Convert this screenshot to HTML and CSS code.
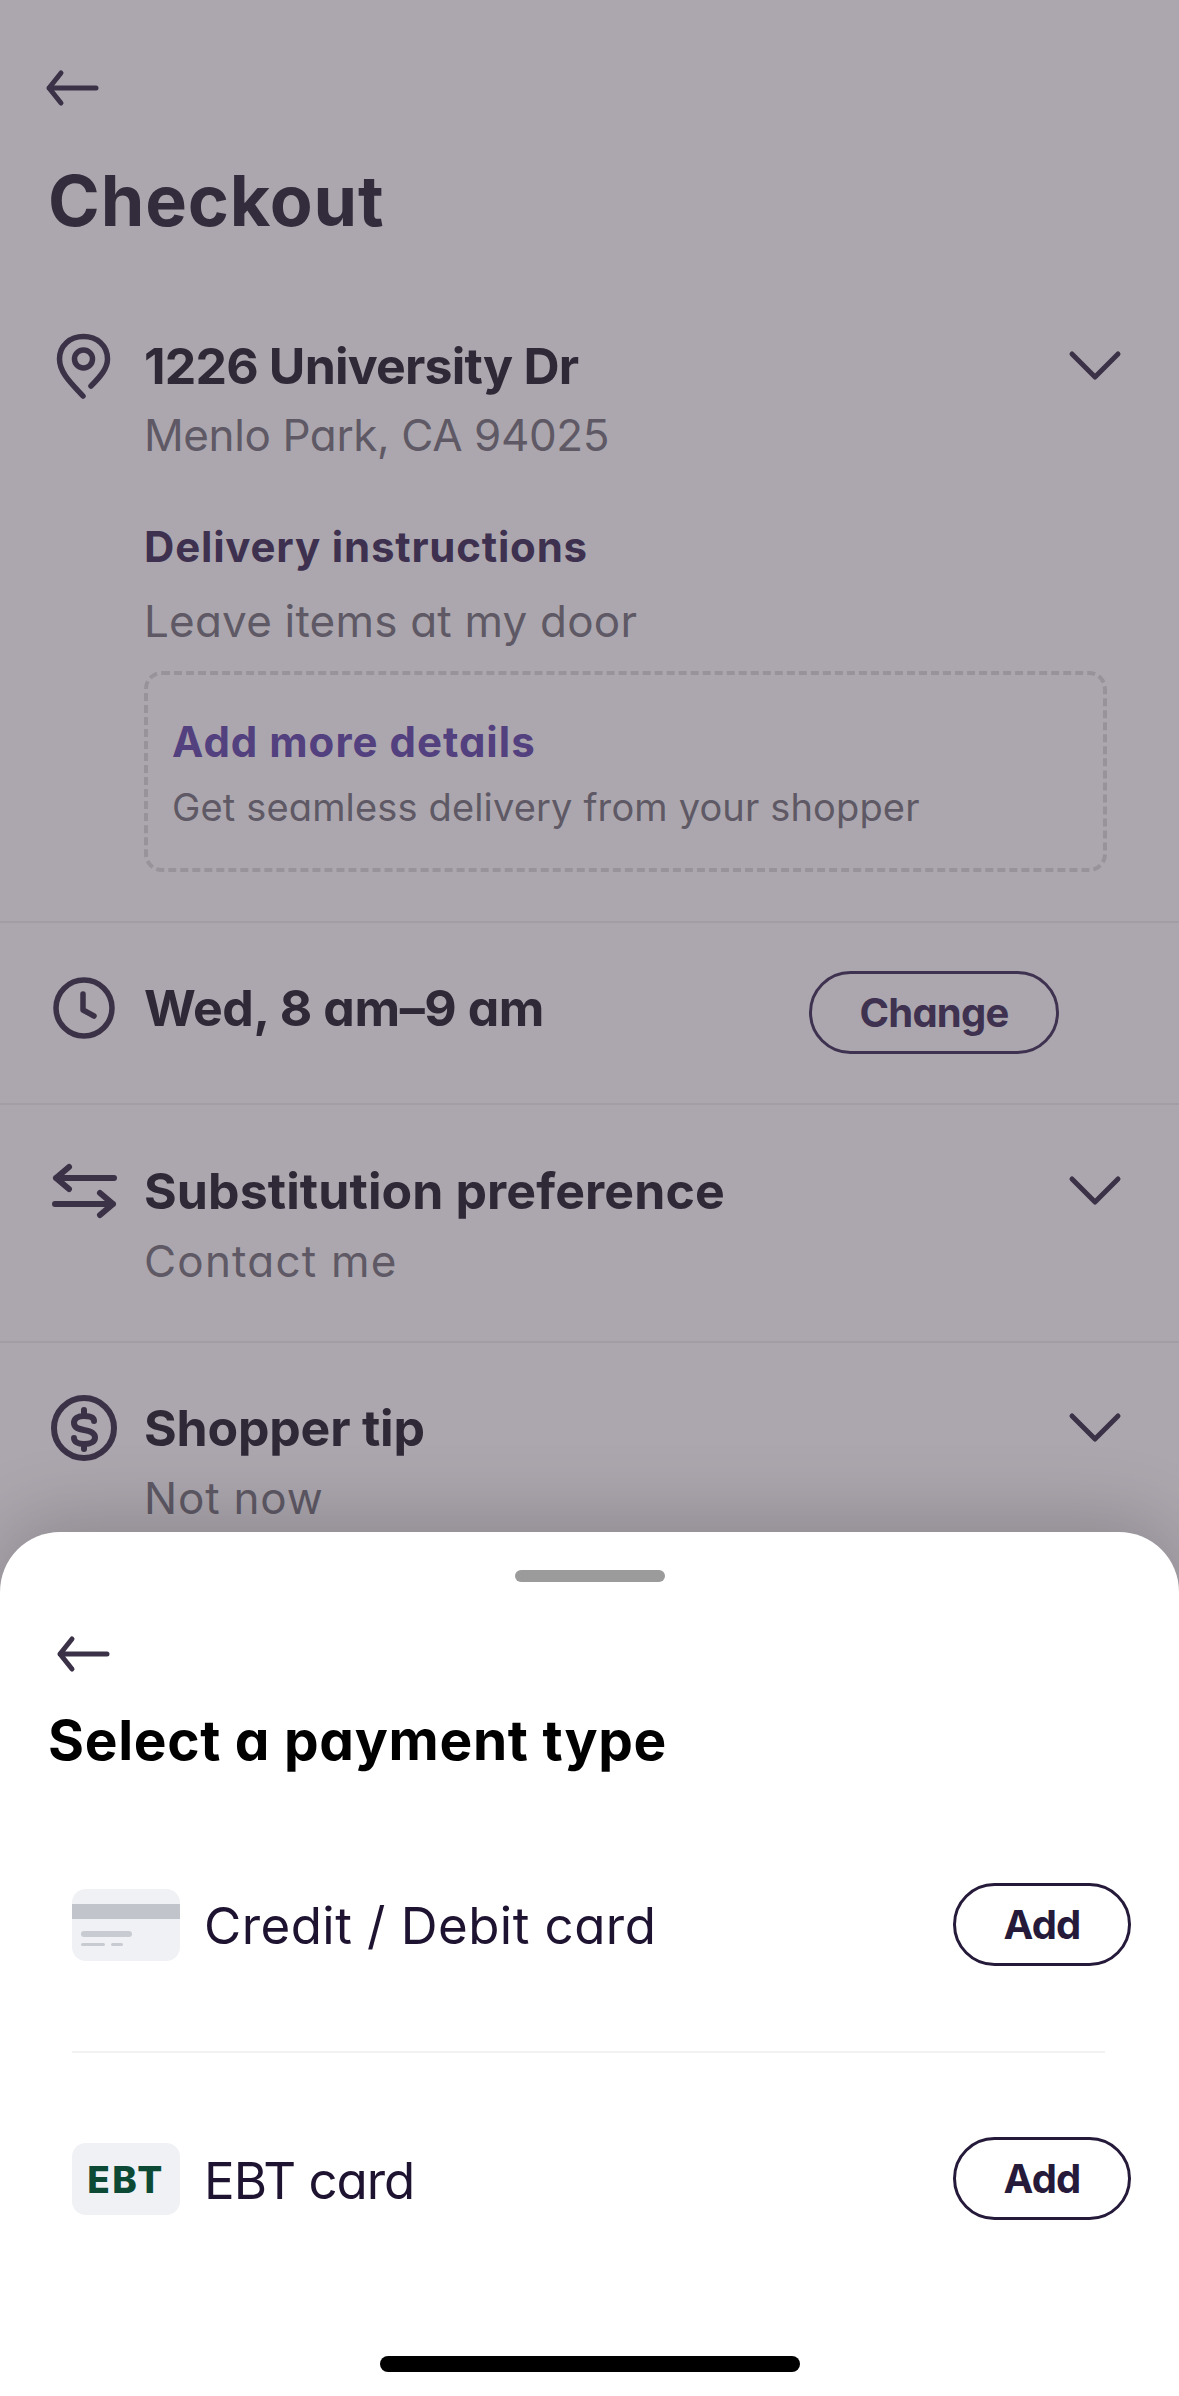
FILE: index.html
```html
<!DOCTYPE html>
<html lang="en">
<head>
  <meta charset="UTF-8" />
  <meta name="viewport" content="width=device-width, initial-scale=1.0" />
  <title>Checkout</title>
  <link rel="stylesheet" href="styles.css">
</head>
<body>
  <div class="screen">
    <div class="checkout">
      <svg class="back" viewBox="0 0 60 60"><path d="M54 30H7M19 15L7 30L19 45"/></svg>
      <h1>Checkout</h1>

      <div class="row row-address">
        <div class="row-icon">
          <svg viewBox="0 0 72 72"><path d="M35 66C24 54 11.5 43 11.5 29C11.5 15.5 22 6.5 35.5 6.5C49 6.5 59.5 15.5 59.5 29C59.5 38 53 46 43 56"/><circle cx="35.5" cy="29" r="9"/></svg>
        </div>
        <div class="row-body">
          <div class="title">1226 University Dr</div>
          <div class="sub sub-address">Menlo Park, CA 94025</div>
          <div class="label">Delivery instructions</div>
          <div class="sub sub-note">Leave items at my door</div>
          <div class="details-box">
            <div class="details-link">Add more details</div>
            <div class="details-text">Get seamless delivery from your shopper</div>
          </div>
        </div>
        <svg class="chevron" viewBox="0 0 60 60"><path d="M7 18L30 41L53 18"/></svg>
      </div>

      <div class="row row-time">
        <div class="row-icon">
          <svg viewBox="0 0 72 72"><circle cx="36" cy="36" r="28"/><path d="M35 22V38L46 44"/></svg>
        </div>
        <div class="title">Wed, 8 am–9 am</div>
        <button class="pill pill-change">Change</button>
      </div>

      <div class="row">
        <div class="row-icon">
          <svg class="icon-heavy" viewBox="0 0 72 72"><path d="M66 23H8M21 12L8 23L21 34M7 49H65M52 38L65 49L52 60"/></svg>
        </div>
        <div class="row-body">
          <div class="title title-wide">Substitution preference</div>
          <div class="sub sub-wide">Contact me</div>
        </div>
        <svg class="chevron" viewBox="0 0 60 60"><path d="M7 18L30 41L53 18"/></svg>
      </div>

      <div class="row">
        <div class="row-icon">
          <svg class="icon-heavy" viewBox="0 0 72 72"><circle cx="36" cy="36" r="30"/><path d="M46 29C46 25 42 24 36 24C30 24 26 26.500 26 31C26 36 31 37 36 38C42 39 47 41 47 45.500C47 49.500 43 52 36 52C30 52 26 50 26 46M36 18V24M36 52V57"/></svg>
        </div>
        <div class="row-body">
          <div class="title title-tip">Shopper tip</div>
          <div class="sub sub-tip">Not now</div>
        </div>
        <svg class="chevron" viewBox="0 0 60 60"><path d="M7 18L30 41L53 18"/></svg>
      </div>
    </div>

    <div class="sheet">
      <div class="handle"></div>
      <svg class="back back-sheet" viewBox="0 0 60 60"><path d="M54 30H7M19 15L7 30L19 45"/></svg>
      <h2>Select a payment type</h2>

      <div class="pay-list">
        <div class="pay-row">
          <svg class="pay-icon" viewBox="0 0 108 72">
            <rect width="108" height="72" rx="14" fill="#eff1f4"/>
            <rect y="15" width="108" height="15" fill="#c2c4cc"/>
            <rect x="9" y="42" width="51" height="6" rx="3" fill="#c9cbd2"/>
            <rect x="9" y="54" width="24" height="3" rx="1.5" fill="#c9cbd2"/>
            <rect x="39" y="54" width="12" height="3" rx="1.5" fill="#c9cbd2"/>
          </svg>
          <div class="pay-name">Credit / Debit card</div>
          <button class="pill pill-add">Add</button>
        </div>
        <div class="pay-divider"></div>
        <div class="pay-row">
          <div class="pay-icon ebt">EBT</div>
          <div class="pay-name pay-name-short">EBT card</div>
          <button class="pill pill-add">Add</button>
        </div>
      </div>

      <div class="home-bar"></div>
    </div>
  </div>
</body>
</html>
```

FILE: styles.css
```css
* {
  box-sizing: border-box;
  margin: 0;
  padding: 0;
}

body {
  font-family: Inter, "Liberation Sans", sans-serif;
  font-feature-settings: "cv11" 1;
  background: #aca7ae;
}

.screen {
  width: 1179px;
  height: 2396px;
  display: flex;
  flex-direction: column;
  overflow: hidden;
}

svg {
  display: block;
  fill: none;
  stroke-linecap: round;
  stroke-linejoin: round;
}

.checkout {
  height: 1532px;
  overflow: hidden;
  background: #aca7ae;
  flex-shrink: 0;
}

.back {
  width: 60px;
  height: 60px;
  margin: 58px 0 0 42px;
  stroke: #3b3247;
  stroke-width: 5;
}

h1 {
  font-size: 70px;
  line-height: 80px;
  font-weight: 700;
  letter-spacing: 0.9px;
  color: #332c3c;
  margin: 43px 0 0 48px;
}

.row {
  display: flex;
  align-items: flex-start;
  padding: 56px 54px 52px 48px;
  border-bottom: 2px solid #a39ea6;
}

.row:last-child {
  padding-top: 55px;
  border-bottom: none;
}

.row-address {
  padding: 95px 54px 49px 48px;
}

.row-icon {
  width: 96px;
  flex-shrink: 0;
}

.row-icon svg {
  width: 72px;
  height: 72px;
  margin-top: -6px;
  stroke: #3b3247;
  stroke-width: 5.5;
}

.row-icon .icon-heavy {
  stroke-width: 6;
}

.row-body {
  flex: 1;
  min-width: 0;
}

.title {
  font-size: 50px;
  line-height: 60px;
  font-weight: 700;
  letter-spacing: -0.4px;
  color: #2f2837;
}

.row-address .title {
  letter-spacing: -0.8px;
}

.title-wide {
  letter-spacing: 0.1px;
}

.title-tip {
  letter-spacing: -0.2px;
}

.sub {
  font-size: 44px;
  line-height: 56px;
  color: #5e5965;
  letter-spacing: 0.2px;
  margin-top: 11px;
}

.sub-address {
  letter-spacing: -0.4px;
}

.sub-wide {
  letter-spacing: 1.2px;
  margin-top: 12px;
}

.sub-tip {
  letter-spacing: 0.8px;
  margin-top: 12px;
}

.label {
  font-size: 42px;
  line-height: 52px;
  font-weight: 700;
  letter-spacing: 0.8px;
  color: #3e3150;
  margin-top: 58px;
}

.sub-note {
  margin-top: 20px;
}

.details-box {
  width: 963px;
  margin-top: 22px;
  padding: 41px 24px 37px;
  border: 4px dashed #98939b;
  border-radius: 18px;
}

.details-link {
  font-size: 42px;
  line-height: 52px;
  font-weight: 700;
  letter-spacing: 1px;
  color: #53407f;
}

.details-text {
  font-size: 38px;
  line-height: 48px;
  letter-spacing: 0.15px;
  color: #5e5965;
  margin-top: 15px;
}

.chevron {
  width: 60px;
  height: 60px;
  flex-shrink: 0;
  stroke: #3b3247;
  stroke-width: 5;
}

.row-time {
  align-items: center;
  padding: 48px 120px 49px 48px;
}

.row-time .title {
  margin-bottom: 10px;
}

.row-time .row-icon svg {
  margin: 0 0 10px;
}

.pill {
  font-family: inherit;
  font-feature-settings: inherit;
  height: 83px;
  background: none;
  border-radius: 42px;
  font-size: 40px;
  font-weight: 700;
  letter-spacing: -0.8px;
  margin-left: auto;
}

.pill-change {
  width: 250px;
  border: 3px solid #3e3250;
  color: #3e3250;
}

.pill-add {
  width: 178px;
  border: 3px solid #251a3a;
  color: #251a3a;
}

.sheet {
  flex: 1;
  position: relative;
  background: #fff;
  border-radius: 60px 60px 0 0;
  box-shadow: 0 -10px 80px rgba(0, 0, 0, 0.2);
}

.handle {
  width: 150px;
  height: 12px;
  margin: 38px auto 0;
  border-radius: 6px;
  background: #9b9b9b;
}

.back-sheet {
  margin: 42px 0 0 53px;
}

h2 {
  font-size: 55px;
  line-height: 64px;
  font-weight: 700;
  letter-spacing: 0.7px;
  color: #000;
  margin: 24px 0 0 48px;
}

.pay-list {
  margin-top: 111px;
  padding: 0 48px 0 72px;
}

.pay-row {
  display: flex;
  align-items: center;
}

.pay-icon {
  width: 108px;
  height: 72px;
  flex-shrink: 0;
  margin-right: 24px;
}

.ebt {
  display: flex;
  align-items: center;
  justify-content: center;
  padding-top: 2px;
  background: #eff1f4;
  border-radius: 14px;
  font-size: 37px;
  font-weight: 800;
  letter-spacing: 2.4px;
  color: #0d4a36;
}

.pay-name {
  font-size: 51px;
  line-height: 60px;
  letter-spacing: 0.45px;
  color: #1e1330;
  padding-top: 3px;
}

.pay-name-short {
  letter-spacing: -1px;
  padding-top: 4px;
}

.pay-divider {
  height: 2px;
  margin: 85px 26px 84px 0;
  background: #f2f2f2;
}

.home-bar {
  width: 420px;
  height: 16px;
  margin: 136px auto 0;
  border-radius: 8px;
  background: #000;
}
```
